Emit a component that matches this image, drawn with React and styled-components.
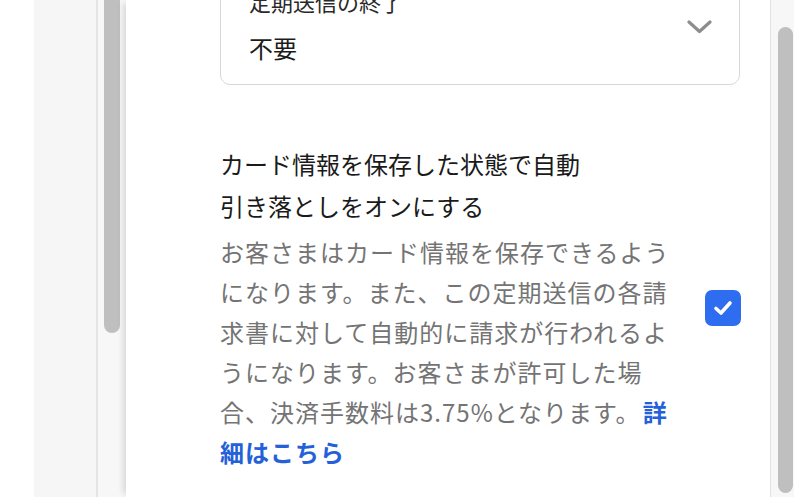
import React, { useState } from "react";
import styled, { createGlobalStyle } from "styled-components";

const GlobalStyle = createGlobalStyle`
  html, body {
    margin: 0;
    padding: 0;
    overflow: hidden;
    background: #ffffff;
  }
  body {
    font-family: "Noto Sans CJK JP", "Noto Sans", sans-serif;
  }
`;

function App() {
  const [autoCharge, setAutoCharge] = useState(true);

  return (
    <>
      <GlobalStyle />
      <Screen>
        <Margin />
        <SideColumn />
        <Divider />
        <Track $width={28}>
          <Thumb $top={-20} $height={353} $left={6} $size={16} />
        </Track>
        <Panel>
          <Content>
            <SelectBox>
              <SelectText>
                <SelectLabel>定期送信の終了</SelectLabel>
                <SelectValue>不要</SelectValue>
              </SelectText>
              <Chevron width="25" height="14" viewBox="0 0 25 14">
                <polyline
                  points="2,2 12.5,11.5 23,2"
                  fill="none"
                  stroke="#8d8d8d"
                  strokeWidth="3.2"
                  strokeLinecap="round"
                  strokeLinejoin="round"
                />
              </Chevron>
            </SelectBox>

            <OptionRow>
              <OptionText>
                <OptionTitle>カード情報を保存した状態で自動引き落としをオンにする</OptionTitle>
                <OptionDesc>
                  お客さまはカード情報を保存できるようになります。また、この定期送信の各請求書に対して自動的に請求が行われるようになります。お客さまが許可した場合、決済手数料は3.75%となります。
                  <DetailLink href="#">詳細はこちら</DetailLink>
                </OptionDesc>
              </OptionText>
              <CheckBox
                $checked={autoCharge}
                onClick={() => setAutoCharge(!autoCharge)}
              >
                {autoCharge && (
                  <svg width="20" height="16" viewBox="0 0 20 16">
                    <polyline
                      points="3,8.5 8,13 17,3"
                      fill="none"
                      stroke="#ffffff"
                      strokeWidth="3.6"
                      strokeLinecap="round"
                      strokeLinejoin="round"
                    />
                  </svg>
                )}
              </CheckBox>
            </OptionRow>
          </Content>
        </Panel>
        <PanelEdge />
        <Track $width={23}>
          <Thumb $top={27} $height={466} $left={7} $size={15} />
        </Track>
      </Screen>
    </>
  );
}

const Screen = styled.div`
  display: flex;
  height: 497px;
  width: 794px;
  overflow: hidden;
`;

const Margin = styled.div`
  width: 34px;
  flex-shrink: 0;
  background: #ffffff;
`;

const SideColumn = styled.div`
  width: 62px;
  flex-shrink: 0;
  background: #f6f6f6;
`;

const Divider = styled.div`
  width: 2px;
  flex-shrink: 0;
  background: #e4e4e4;
`;

const Track = styled.div`
  width: ${(p) => p.$width}px;
  flex-shrink: 0;
  background: #f7f7f7;
  overflow: hidden;
`;

const Thumb = styled.div`
  margin-top: ${(p) => p.$top}px;
  margin-left: ${(p) => p.$left}px;
  width: ${(p) => p.$size}px;
  height: ${(p) => p.$height}px;
  border-radius: 8px;
  background: #bfbfbf;
`;

const Panel = styled.div`
  flex: 1;
  background: #ffffff;
  box-shadow: -6px 0 6px -3px rgba(0, 0, 0, 0.12);
  position: relative;
  overflow: hidden;
`;

const PanelEdge = styled.div`
  width: 1px;
  flex-shrink: 0;
  background: #e2e2e2;
`;

const Content = styled.div`
  margin-top: -30px;
  padding: 0 29px 0 94px;
  display: flex;
  flex-direction: column;
`;

const SelectBox = styled.div`
  display: flex;
  align-items: flex-start;
  justify-content: space-between;
  height: 115px;
  box-sizing: border-box;
  margin-right: 1px;
  padding: 10px 28px 0 28px;
  border: 1.5px solid #d8d8d8;
  border-radius: 10px;
`;

const SelectText = styled.div`
  display: flex;
  flex-direction: column;
`;

const SelectLabel = styled.span`
  font-size: 22px;
  line-height: 40px;
  color: #2a2a2a;
`;

const SelectValue = styled.span`
  margin-top: 7px;
  font-size: 24px;
  line-height: 40px;
  color: #1c1c1c;
`;

const Chevron = styled.svg`
  margin-top: 39px;
  margin-right: -1px;
`;

const OptionRow = styled.div`
  display: flex;
  align-items: center;
  gap: 24px;
  margin-top: 58px;
`;

const OptionText = styled.div`
  display: flex;
  flex-direction: column;
  width: 462px;
  gap: 5px;
`;

const OptionTitle = styled.div`
  max-width: 372px;
  font-size: 24px;
  line-height: 42px;
  color: #1a1a1a;
`;

const OptionDesc = styled.p`
  margin: 0;
  font-size: 24px;
  letter-spacing: 1px;
  line-height: 40px;
  color: #747474;
  line-break: strict;
`;

const DetailLink = styled.a`
  margin-left: 2px;
  color: #2461d9;
  font-weight: 700;
  text-decoration: none;
`;

const CheckBox = styled.button`
  width: 36px;
  height: 36px;
  flex-shrink: 0;
  display: flex;
  align-items: center;
  justify-content: center;
  padding: 0;
  border: none;
  border-radius: 7px;
  cursor: pointer;
  background: ${(p) => (p.$checked ? "#2e6df0" : "#ffffff")};
`;

export default App;
